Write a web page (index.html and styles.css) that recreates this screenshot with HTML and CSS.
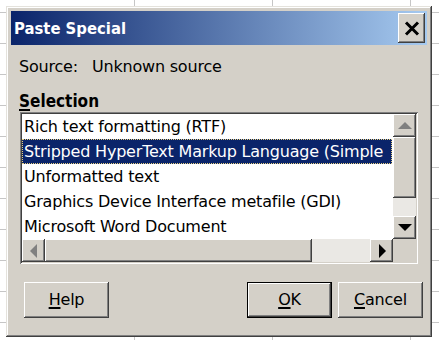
FILE: index.html
```html
<!DOCTYPE html>
<html lang="en">
<head>
  <meta charset="UTF-8">
  <title>Paste Special</title>
  <link rel="stylesheet" href="styles.css">
</head>
<body>
  <div class="window">
    <div class="titlebar">
      <span class="title">Paste Special</span>
      <button class="close raised">
        <svg width="16" height="15" viewBox="0 0 16 15"><path d="M2 1.5 L14 13.5 M14 1.5 L2 13.5" stroke="#000" stroke-width="3"/></svg>
      </button>
    </div>

    <div class="body">
      <div class="source"><span>Source:</span><span>Unknown source</span></div>
      <div class="label"><u>S</u>election</div>

      <div class="listbox">
        <div class="list">
          <div class="item">Rich text formatting (RTF)</div>
          <div class="item selected">Stripped HyperText Markup Language (Simple</div>
          <div class="item">Unformatted text</div>
          <div class="item">Graphics Device Interface metafile (GDI)</div>
          <div class="item">Microsoft Word Document</div>
        </div>
        <div class="vscroll">
          <div class="sbtn raised"><span class="arrow up off"></span></div>
          <div class="thumb raised"></div>
          <div class="track"></div>
          <div class="sbtn raised"><span class="arrow down"></span></div>
        </div>
        <div class="hscroll">
          <div class="sbtn raised"><span class="arrow left off"></span></div>
          <div class="thumb raised"></div>
          <div class="track"></div>
          <div class="sbtn raised"><span class="arrow right"></span></div>
        </div>
        <div class="corner"></div>
      </div>

      <div class="buttons">
        <button class="btn raised"><u>H</u>elp</button>
        <span class="spacer"></span>
        <button class="btn raised default"><u>O</u>K</button>
        <button class="btn raised"><u>C</u>ancel</button>
      </div>
    </div>
  </div>
</body>
</html>
```

FILE: styles.css
```css
body {
  margin: 0;
  width: 439px;
  height: 340px;
  overflow: hidden;
  position: relative;
  background-color: #fff;
  background-image:
    linear-gradient(90deg, transparent 134px, #c6c6c6 134px, #c6c6c6 135px, transparent 135px),
    linear-gradient(180deg, transparent 12px, #c6c6c6 12px, #c6c6c6 13px, transparent 13px);
  background-size: 138px 100%, 100% 31px;
  font-family: "DejaVu Sans", sans-serif;
  font-size: 16px;
  letter-spacing: -0.2px;
  color: #000;
}
button {
  font: inherit;
  letter-spacing: inherit;
  color: inherit;
  border: none;
  padding: 0;
  background: #d4d0c8;
}
u {
  text-decoration-thickness: 2px;
  text-underline-offset: 2px;
}
.raised {
  background: #d4d0c8;
  box-shadow: inset -1px -1px #404040, inset 1px 1px #fff, inset -2px -2px #808080, inset 2px 2px #d4d0c8;
}

/* window on the sheet */
.window {
  position: absolute;
  left: 6px;
  top: 6px;
  width: 426px;
  height: 331px;
  box-sizing: border-box;
  padding: 5px;
  background: #d4d0c8;
  box-shadow: inset -1px -1px #404040, inset 1px 1px #e4e2dc, inset -2px -2px #808080, inset 2px 2px #fff;
  display: flex;
  flex-direction: column;
}
.titlebar {
  height: 34px;
  display: flex;
  align-items: center;
  padding: 0 2px 0 3px;
  background: linear-gradient(90deg, #0a246a, #a6caf0);
}
.title {
  flex: 1;
  color: #fff;
  font-family: "DejaVu Sans Condensed", "DejaVu Sans", sans-serif;
  font-weight: bold;
  font-size: 16.5px;
  letter-spacing: 0;
}
.close {
  width: 27px;
  height: 30px;
  display: flex;
  align-items: center;
  justify-content: center;
}

.body {
  flex: 1;
  padding: 12px 0 0 8px;
}
.source {
  display: flex;
  gap: 14px;
  line-height: 20px;
}
.label {
  margin-top: 14px;
  line-height: 20px;
  font-weight: bold;
  font-family: "DejaVu Sans Condensed", "DejaVu Sans", sans-serif;
  font-size: 17px;
  letter-spacing: 0;
}

/* list box */
.listbox {
  margin: 1px 0 0 1px;
  width: 398px;
  height: 152px;
  box-sizing: border-box;
  padding: 2px;
  background: #fff;
  box-shadow: inset 1px 1px #808080, inset -1px -1px #fff, inset 2px 2px #404040, inset -2px -2px #d4d0c8;
  display: grid;
  grid-template-columns: 371px 23px;
  grid-template-rows: 125px 23px;
}
.list {
  overflow: hidden;
}
.item {
  height: 25px;
  line-height: 25px;
  padding-left: 2px;
  white-space: nowrap;
}
.item.selected {
  background: #0a246a;
  color: #fff;
  outline: 1px dotted #e8d080;
  outline-offset: -1px;
  margin-right: 1px;
}
.vscroll {
  display: flex;
  flex-direction: column;
}
.vscroll .sbtn { height: 23px; }
.vscroll .thumb { height: 61px; }
.hscroll {
  display: flex;
}
.hscroll .sbtn { width: 23px; }
.hscroll .thumb { width: 267px; }
.track {
  flex: 1;
  background: #eae8e4;
}
.sbtn {
  display: flex;
  align-items: center;
  justify-content: center;
}
.corner {
  background: #d4d0c8;
}
.arrow {
  width: 0;
  height: 0;
  border: 7px solid transparent;
}
.arrow.up { border-bottom-color: #000; border-top-width: 0; }
.arrow.down { border-top-color: #000; border-bottom-width: 0; }
.arrow.left { border-right-color: #000; border-left-width: 0; }
.arrow.right { border-left-color: #000; border-right-width: 0; margin-left: 2px; }
.arrow.up.off { border-bottom-color: #808080; }
.arrow.left.off { border-right-color: #808080; }

/* buttons */
.buttons {
  margin-top: 18px;
  padding-left: 5px;
  display: flex;
  gap: 6px;
}
.spacer { flex: 1; }
.btn {
  width: 85px;
  height: 36px;
  line-height: 36px;
}
.btn.default {
  box-shadow: inset 0 0 0 1px #000, inset -2px -2px #404040, inset 2px 2px #fff, inset -3px -3px #808080;
}
.buttons .btn:last-child { margin-right: 4px; }
```
